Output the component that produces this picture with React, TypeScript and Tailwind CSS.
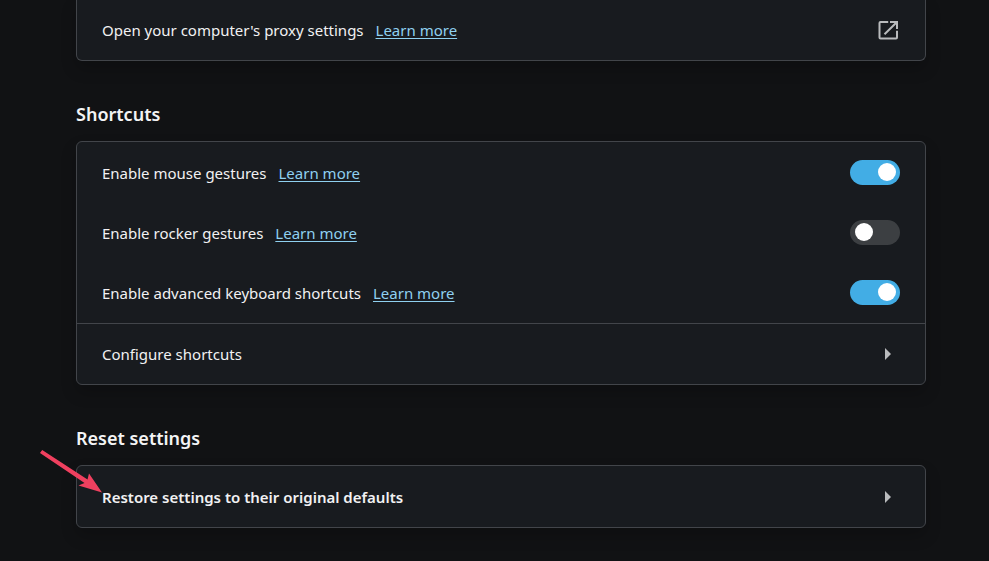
import { useId, useState } from "react";
import type { ReactNode } from "react";

const cardClass =
  "rounded-md border border-[#42454a] bg-[#181b1f] shadow-[0_8px_16px_rgba(0,0,0,0.2)]";

function LearnMore({ topic }: { topic: string }) {
  return (
    <a href={`#${topic}`} className="text-[#8fd0f0] underline underline-offset-2">
      Learn more
    </a>
  );
}

function Section({ title, children }: { title: string; children: ReactNode }) {
  return (
    <section>
      <h2 className="pt-[39px] pb-[13px] text-lg font-semibold text-[#f4f4f5]">{title}</h2>
      <div className={cardClass}>{children}</div>
    </section>
  );
}

function ToggleRow({ label, topic, initial }: { label: string; topic: string; initial: boolean }) {
  const id = useId();
  const [on, setOn] = useState(initial);

  return (
    <div className="flex h-15 items-center justify-between px-[25px]">
      <div className="flex gap-3 pt-0.5">
        <label htmlFor={id}>{label}</label>
        <LearnMore topic={topic} />
      </div>
      <input
        id={id}
        type="checkbox"
        role="switch"
        checked={on}
        onChange={(e) => setOn(e.target.checked)}
        className="flex h-[25px] w-[50px] shrink-0 cursor-pointer appearance-none items-center rounded-full bg-[#3c3f42] px-[5px] before:h-[18px] before:w-[18px] before:rounded-full before:bg-white checked:justify-end checked:bg-[#42ade5] checked:px-1"
      />
    </div>
  );
}

function LinkRow({ label, strong }: { label: string; strong?: boolean }) {
  return (
    <button
      type="button"
      className={`flex w-full cursor-pointer items-center justify-between pr-[34px] pl-[25px] text-left ${strong ? "h-[61px] font-semibold" : "h-15"}`}
    >
      <span>{label}</span>
      <svg viewBox="0 0 6 12" className="h-3 w-1.5 fill-[#b9bbbd]" aria-hidden="true">
        <path d="M0 0 6 6 0 12Z" />
      </svg>
    </button>
  );
}

export default function App() {
  return (
    <main className="min-h-screen bg-[#111214] pr-[63px] pl-[76px] font-['Noto_Sans','Open_Sans',sans-serif] text-[15px] leading-6 text-[#f1f1f2]">
      <div className={`${cardClass} flex h-[61px] items-center justify-between rounded-t-none border-t-0 px-[25px]`}>
        <div className="flex gap-3">
          <span>Open your computer's proxy settings</span>
          <LearnMore topic="proxy" />
        </div>
        <button type="button" aria-label="Open proxy settings" className="cursor-pointer">
          <svg viewBox="0 0 24 24" className="size-6" fill="none" stroke="#b9bbbd" strokeWidth="2" aria-hidden="true">
            <path d="M12.200 4H4.500a1 1 0 0 0-1 1v14.500a1 1 0 0 0 1 1h15.500a1 1 0 0 0 1-1V12.800" />
            <path d="M14 4h7v7M21 4 8.500 16.200" />
          </svg>
        </button>
      </div>

      <Section title="Shortcuts">
        <ToggleRow label="Enable mouse gestures" topic="mouse-gestures" initial />
        <ToggleRow label="Enable rocker gestures" topic="rocker-gestures" initial={false} />
        <ToggleRow label="Enable advanced keyboard shortcuts" topic="keyboard-shortcuts" initial />
        <div className="mt-px border-t border-[#42454a]">
          <LinkRow label="Configure shortcuts" />
        </div>
      </Section>

      <Section title="Reset settings">
        <div className="relative">
          <LinkRow label="Restore settings to their original defaults" strong />
          {/* pointer drawn over the card's corner */}
          <svg
            viewBox="0 0 64 46"
            className="pointer-events-none absolute -top-4 -left-[38px] h-[46px] w-16 fill-[#f0405f]"
            aria-hidden="true"
          >
            <path d="M3.200 0 48.500 29.500 50 23.500 63 42.500 39.500 35.500 45.500 33 1 3Z" />
          </svg>
        </div>
      </Section>
    </main>
  );
}
